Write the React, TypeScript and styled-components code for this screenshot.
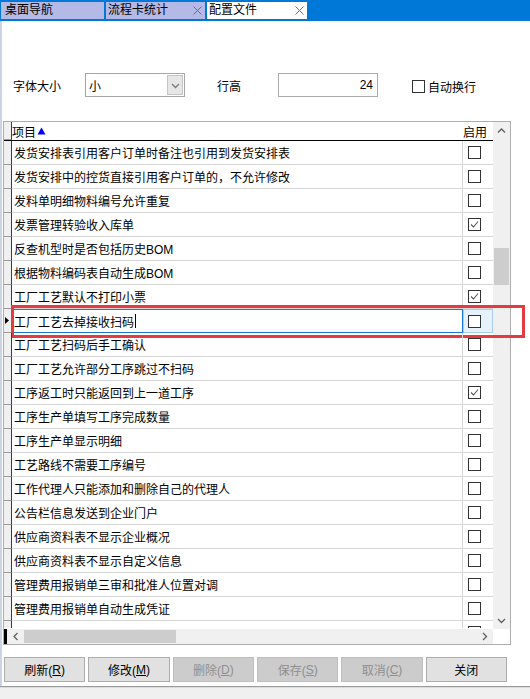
import React from 'react'
import styled, { createGlobalStyle } from 'styled-components'

const GlobalStyle = createGlobalStyle`
  html, body {
    margin: 0;
    padding: 0;
    background: #fff;
  }
  body {
    font-family: 'Liberation Sans', 'Noto Sans CJK SC', sans-serif;
    font-size: 12px;
    color: #000;
  }
`

const options = [
  { name: '发货安排表引用客户订单时备注也引用到发货安排表', on: false },
  { name: '发货安排中的控货直接引用客户订单的，不允许修改', on: false },
  { name: '发料单明细物料编号允许重复', on: false },
  { name: '发票管理转验收入库单', on: true },
  { name: '反查机型时是否包括历史BOM', on: false },
  { name: '根据物料编码表自动生成BOM', on: false },
  { name: '工厂工艺默认不打印小票', on: true },
  { name: '工厂工艺去掉接收扫码', on: false },
  { name: '工厂工艺扫码后手工确认', on: false },
  { name: '工厂工艺允许部分工序跳过不扫码', on: false },
  { name: '工序返工时只能返回到上一道工序', on: true },
  { name: '工序生产单填写工序完成数量', on: false },
  { name: '工序生产单显示明细', on: false },
  { name: '工艺路线不需要工序编号', on: false },
  { name: '工作代理人只能添加和删除自己的代理人', on: false },
  { name: '公告栏信息发送到企业门户', on: false },
  { name: '供应商资料表不显示企业概况', on: false },
  { name: '供应商资料表不显示自定义信息', on: false },
  { name: '管理费用报销单三审和批准人位置对调', on: false },
  { name: '管理费用报销单自动生成凭证', on: false },
]

const SELECTED = 7

const buttons = [
  { label: '刷新', key: 'R', enabled: true },
  { label: '修改', key: 'M', enabled: true },
  { label: '删除', key: 'D', enabled: false },
  { label: '保存', key: 'S', enabled: false },
  { label: '取消', key: 'C', enabled: false },
  { label: '关闭', key: '', enabled: true },
]

type Dir = 'up' | 'down' | 'left' | 'right'

function Chevron({ dir, color = '#606060' }: { dir: Dir; color?: string }) {
  const vertical = dir === 'up' || dir === 'down'
  const pts = {
    up: '1,5.5 4.5,2 8,5.5',
    down: '1,2 4.5,5.5 8,2',
    left: '5.5,1 2,4.5 5.5,8',
    right: '2,1 5.5,4.5 2,8',
  }[dir]
  return (
    <svg width={vertical ? 9 : 7} height={vertical ? 7 : 9} viewBox={vertical ? '0 0 9 7' : '0 0 7 9'}>
      <polyline points={pts} fill="none" stroke={color} strokeWidth="1.3" />
    </svg>
  )
}

function CloseIcon() {
  return (
    <svg width="9" height="9" viewBox="0 0 9 9">
      <path d="M0.5 0.5 L8.5 8.5 M8.5 0.5 L0.5 8.5" stroke="#6e6e6e" strokeWidth="1" />
    </svg>
  )
}

function Check({ checked }: { checked: boolean }) {
  return (
    <s.Box>
      {checked && (
        <svg width="11" height="11" viewBox="0 0 11 11">
          <polyline points="2,5.5 4.5,8 9,2.5" fill="none" stroke="#555" strokeWidth="1.1" />
        </svg>
      )}
    </s.Box>
  )
}

function App() {
  return (
    <s.Window>
      <GlobalStyle />
      <s.TabBar>
        <s.Tab $width={103} $pad={4}>桌面导航</s.Tab>
        <s.Tab $width={99}>
          流程卡统计
          <CloseIcon />
        </s.Tab>
        <s.Tab $width={100} $active>
          配置文件
          <CloseIcon />
        </s.Tab>
      </s.TabBar>

      <s.Main>
        <s.Controls>
          <span>字体大小</span>
          <s.Select>
            <span>小</span>
            <s.DropButton>
              <Chevron dir="down" color="#7a7a7a" />
            </s.DropButton>
          </s.Select>
          <span>行高</span>
          <s.NumberInput>24</s.NumberInput>
          <s.CheckLabel>
            <Check checked={false} />
            自动换行
          </s.CheckLabel>
        </s.Controls>

        <s.Grid>
          <s.GridBody>
            <s.TableArea>
              <s.HeaderRow>
                <s.RowHead />
                <s.ItemHead>
                  项目
                  <svg width="9" height="8" viewBox="0 0 9 8">
                    <polygon points="4.5,0.5 8.5,7.5 0.5,7.5" fill="#0000ff" />
                  </svg>
                </s.ItemHead>
                <s.EnableHead>启用</s.EnableHead>
              </s.HeaderRow>

              {options.map((o, i) => (
                <s.Row key={o.name}>
                  <s.RowHead>
                    {i === SELECTED && (
                      <svg width="4" height="7" viewBox="0 0 4 7">
                        <polygon points="0,0 4,3.5 0,7" fill="#000" />
                      </svg>
                    )}
                  </s.RowHead>
                  <s.ItemCell $selected={i === SELECTED}>
                    {o.name}
                    {i === SELECTED && <s.Caret />}
                  </s.ItemCell>
                  <s.EnableCell $selected={i === SELECTED}>
                    <Check checked={o.on} />
                  </s.EnableCell>
                  {i === SELECTED && <s.Highlight />}
                </s.Row>
              ))}
              <s.Row $partial>
                <s.RowHead />
                <s.ItemCell />
                <s.EnableCell>
                  <Check checked={false} />
                </s.EnableCell>
              </s.Row>
            </s.TableArea>

            <s.VScroll>
              <s.ScrollButton>
                <Chevron dir="up" />
              </s.ScrollButton>
              <s.VTrack>
                <s.VThumb />
              </s.VTrack>
              <s.ScrollButton>
                <Chevron dir="down" />
              </s.ScrollButton>
            </s.VScroll>
          </s.GridBody>

          <s.HScrollRow>
            <s.HScroll>
              <s.RowMark />
              <s.HButton>
                <Chevron dir="left" />
              </s.HButton>
              <s.HThumb />
              <s.HSpacer />
              <s.HButton>
                <Chevron dir="right" />
              </s.HButton>
            </s.HScroll>
            <s.Corner />
          </s.HScrollRow>
        </s.Grid>

        <s.ButtonBar>
          {buttons.map(b => (
            <s.Button key={b.label} disabled={!b.enabled}>
              {b.label}
              {b.key && (
                <>
                  (<u>{b.key}</u>)
                </>
              )}
            </s.Button>
          ))}
        </s.ButtonBar>
      </s.Main>

      <s.StatusBar />
    </s.Window>
  )
}

const s = {
  Window: styled.div`
    width: 530px;
    height: 699px;
    display: flex;
    flex-direction: column;
    background: #fff;
  `,

  TabBar: styled.div`
    height: 21px;
    box-sizing: border-box;
    padding: 2px 0 2px 1px;
    display: flex;
    gap: 2px;
    background: #0078d7;
  `,

  Tab: styled.div<{ $width: number; $active?: boolean; $pad?: number }>`
    width: ${p => p.$width}px;
    box-sizing: border-box;
    padding: 0 3px 0 ${p => p.$pad ?? 2}px;
    display: flex;
    align-items: center;
    justify-content: space-between;
    background: ${p => (p.$active ? '#ffffff' : '#b4b9e6')};
    line-height: 17px;
    white-space: nowrap;
  `,

  Main: styled.div`
    flex: 1;
    display: flex;
    flex-direction: column;
    border-left: 2px solid #cbd3e4;
  `,

  Controls: styled.div`
    margin-top: 52px;
    height: 24px;
    padding-left: 11px;
    display: grid;
    grid-template-columns: 72px 132px 61px 134px auto;
    align-items: center;
  `,

  Select: styled.div`
    width: 100px;
    height: 24px;
    box-sizing: border-box;
    border: 1px solid #a6a6a6;
    padding: 0 1px 0 3px;
    display: flex;
    align-items: center;
    justify-content: space-between;
  `,

  DropButton: styled.div`
    width: 16px;
    height: 20px;
    box-sizing: border-box;
    border: 1px solid #c4c4c4;
    background: #e6e6e6;
    display: flex;
    align-items: center;
    justify-content: center;
  `,

  NumberInput: styled.div`
    width: 100px;
    height: 24px;
    box-sizing: border-box;
    border: 1px solid #ababab;
    padding-right: 4px;
    display: flex;
    align-items: center;
    justify-content: flex-end;
  `,

  CheckLabel: styled.label`
    display: flex;
    align-items: center;
    gap: 3px;
    padding-top: 3px;
  `,

  Box: styled.span`
    width: 13px;
    height: 13px;
    box-sizing: border-box;
    border: 1px solid #333;
    background: #fff;
    display: flex;
    align-items: center;
    justify-content: center;
  `,

  Grid: styled.div`
    margin: 24px 0 0 1px;
    width: 508px;
    height: 524px;
    box-sizing: border-box;
    border: 1px solid #adadad;
    display: flex;
    flex-direction: column;
  `,

  GridBody: styled.div`
    height: 507px;
    display: flex;
  `,

  TableArea: styled.div`
    width: 489px;
    display: flex;
    flex-direction: column;
  `,

  HeaderRow: styled.div`
    height: 19px;
    flex-shrink: 0;
    box-sizing: border-box;
    border-bottom: 1px solid #000;
    display: flex;
  `,

  RowHead: styled.div`
    width: 8px;
    height: 24px;
    flex-shrink: 0;
    box-sizing: border-box;
    background: #f0f0f0;
    border-right: 1px solid #3c3c3c;
    border-bottom: 1px solid #9a9a9a;
    display: flex;
    align-items: center;
    padding-left: 1px;

    ${'' /* header cell follows the header height */}
    div:first-child > & {
      height: 100%;
    }
  `,

  ItemHead: styled.div`
    width: 451px;
    display: flex;
    align-items: center;
    gap: 1px;
  `,

  EnableHead: styled.div`
    width: 30px;
    padding-left: 1px;
    display: flex;
    align-items: center;
  `,

  Row: styled.div<{ $partial?: boolean }>`
    position: relative;
    height: ${p => (p.$partial ? '7px' : '24px')};
    flex-shrink: 0;
    overflow: ${p => (p.$partial ? 'hidden' : 'visible')};
    display: flex;
    align-items: flex-start;
  `,

  ItemCell: styled.div<{ $selected?: boolean }>`
    width: 451px;
    height: 24px;
    box-sizing: border-box;
    padding-left: 2px;
    display: flex;
    align-items: center;
    white-space: nowrap;
    border-right: 1px solid #d6d6d6;
    border-bottom: 1px solid #d6d6d6;
    ${p =>
      p.$selected &&
      `
      border: 1px solid #1a78d4;
      padding-left: 1px;
    `}
  `,

  Caret: styled.span`
    display: inline-block;
    width: 1px;
    height: 14px;
    margin-left: 1px;
    background: #000;
  `,

  EnableCell: styled.div<{ $selected?: boolean }>`
    width: 30px;
    height: 24px;
    box-sizing: border-box;
    padding-left: 5px;
    display: flex;
    align-items: center;
    border-bottom: 1px solid #d6d6d6;
    ${p =>
      p.$selected &&
      `
      background: #e5f1fb;
      border: 1px solid #a8cdf0;
      padding-left: 4px;
    `}
  `,

  Highlight: styled.span`
    position: absolute;
    top: -4px;
    left: 7px;
    right: -32px;
    height: 33px;
    box-sizing: border-box;
    border: 3px solid #e33b3f;
    pointer-events: none;
  `,

  VScroll: styled.div`
    width: 17px;
    background: #f0f0f0;
    display: flex;
    flex-direction: column;
  `,

  ScrollButton: styled.div`
    height: 17px;
    display: flex;
    align-items: center;
    justify-content: center;
  `,

  VTrack: styled.div`
    flex: 1;
  `,

  VThumb: styled.div`
    margin: 109px 1px 0 1px;
    height: 37px;
    background: #cdcdcd;
  `,

  HScrollRow: styled.div`
    height: 15px;
    display: flex;
  `,

  HScroll: styled.div`
    width: 489px;
    background: #f0f0f0;
    display: flex;
    align-items: stretch;
  `,

  RowMark: styled.div`
    width: 3px;
    background: #000;
  `,

  HButton: styled.div`
    width: 17px;
    display: flex;
    align-items: center;
    justify-content: center;
  `,

  HThumb: styled.div`
    width: 152px;
    margin: 1px 0;
    background: #cdcdcd;
  `,

  HSpacer: styled.div`
    flex: 1;
  `,

  Corner: styled.div`
    flex: 1;
    background: #fff;
  `,

  ButtonBar: styled.div`
    margin-top: 12px;
    padding-left: 2px;
    width: 503px;
    display: flex;
    gap: 3px;
  `,

  Button: styled.button`
    flex: 1;
    height: 25px;
    box-sizing: border-box;
    margin: 0;
    padding: 0;
    font: inherit;
    background: ${p => (p.disabled ? '#cccccc' : '#e1e1e1')};
    border: 1px solid ${p => (p.disabled ? '#bfbfbf' : '#adadad')};
    color: ${p => (p.disabled ? '#8f8f8f' : '#000')};
    display: flex;
    align-items: center;
    justify-content: center;
  `,

  StatusBar: styled.div`
    height: 13px;
    box-sizing: border-box;
    border-top: 1px solid #9a9a9a;
    box-shadow: inset 0 1px 0 #dcdcdc;
    background: #f0f0f0;
  `,
}

export default App
